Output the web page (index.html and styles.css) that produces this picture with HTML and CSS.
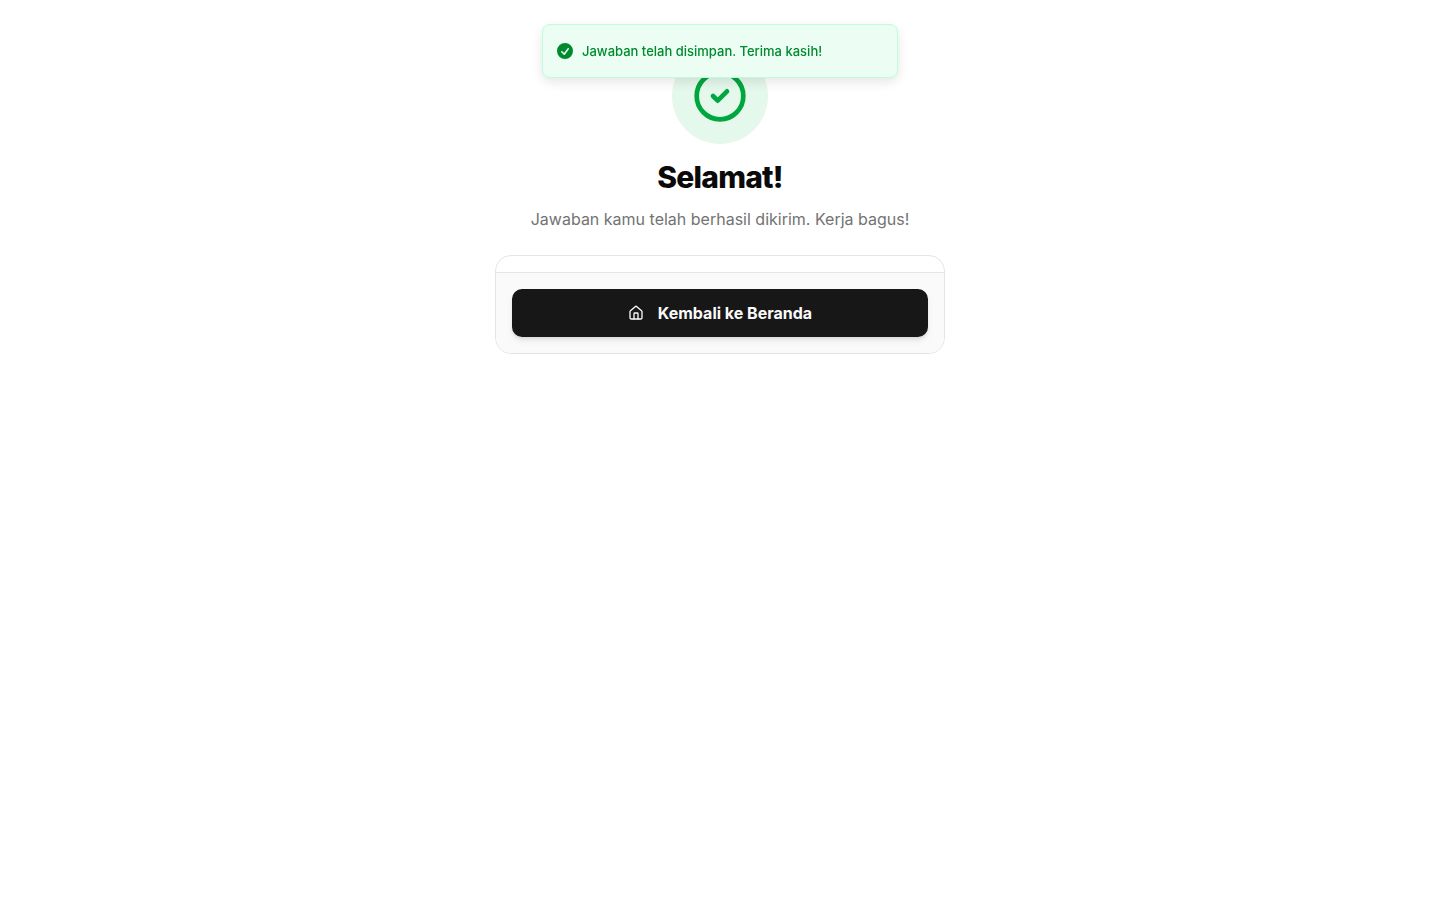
FILE: index.html
```html
<!DOCTYPE html>
<html lang="id">

<head>
    <meta charset="UTF-8">
    <meta name="viewport" content="width=device-width, initial-scale=1.0">
    <title>Selamat!</title>
    <link rel="stylesheet" href="styles.css">
</head>

<body>

    <div class="toast" role="status">
        <svg class="toast-icon" viewBox="0 0 20 20" fill="currentColor" aria-hidden="true">
            <path fill-rule="evenodd" clip-rule="evenodd" d="M10 18a8 8 0 100-16 8 8 0 000 16zm3.857-9.809a.75.75 0 00-1.214-.882l-3.483 4.79-1.88-1.88a.75.75 0 10-1.06 1.061l2.5 2.5a.75.75 0 001.137-.089l4-5.5z"/>
        </svg>
        <p class="toast-text">Jawaban telah disimpan. Terima kasih!</p>
    </div>

    <main class="container">
        <header class="header">
            <div class="badge">
                <svg class="badge-icon" viewBox="0 0 24 24" aria-hidden="true">
                    <circle cx="12" cy="12" r="10"/>
                    <path d="m9 12 2 2 4-4"/>
                </svg>
            </div>
            <h1>Selamat!</h1>
            <p class="subtitle">Jawaban kamu telah berhasil dikirim. Kerja bagus!</p>
        </header>

        <section class="card">
            <div class="card-footer">
                <button type="button" class="btn">
                    <svg class="btn-icon" viewBox="0 0 24 24" aria-hidden="true">
                        <path d="M15 21v-8a1 1 0 0 0-1-1h-4a1 1 0 0 0-1 1v8"/>
                        <path d="M3 10a2 2 0 0 1 .709-1.528l7-5.999a2 2 0 0 1 2.582 0l7 5.999A2 2 0 0 1 21 10v9a2 2 0 0 1-2 2H5a2 2 0 0 1-2-2z"/>
                    </svg>
                    Kembali ke Beranda
                </button>
            </div>
        </section>
    </main>

</body>

</html>
```
FILE: styles.css
```css
* {
    margin: 0;
    padding: 0;
    box-sizing: border-box;
}

body {
    font-family: Inter, 'Liberation Sans', sans-serif;
    background-color: #ffffff;
    color: #0a0a0a;
    line-height: 24px;
}

svg {
    flex-shrink: 0;
}

/* Notification on top of the page */
.toast {
    position: fixed;
    top: 24px;
    left: 50%;
    transform: translateX(-50%);
    z-index: 10;
    display: flex;
    align-items: center;
    gap: 7px;
    width: 356px;
    max-width: calc(100% - 32px);
    padding: 16px 12px;
    background-color: #ecfdf3;
    border: 1px solid #bffcd9;
    border-radius: 8px;
    box-shadow: 0 4px 12px rgba(0, 0, 0, 0.1);
    color: #008a2e;
}

.toast-icon {
    width: 20px;
    height: 20px;
}

.toast-text {
    font-size: 13px;
    font-weight: 500;
    line-height: 20px;
}

.container {
    max-width: 482px;
    margin: 0 auto;
    padding: 48px 16px;
}

.header {
    display: flex;
    flex-direction: column;
    align-items: center;
    text-align: center;
}

.badge {
    display: flex;
    align-items: center;
    justify-content: center;
    width: 96px;
    height: 96px;
    margin-bottom: 16px;
    background-color: #e5f8ec;
    border-radius: 50%;
}

.badge-icon,
.btn-icon {
    fill: none;
    stroke: currentColor;
    stroke-width: 2;
    stroke-linecap: round;
    stroke-linejoin: round;
}

.badge-icon {
    width: 56px;
    height: 56px;
    color: #00a63e;
}

h1 {
    font-size: 30px;
    font-weight: 800;
    line-height: 34px;
    letter-spacing: -0.025em;
    margin-bottom: 12px;
}

.subtitle {
    font-size: 16px;
    line-height: 26px;
    color: #737373;
    margin-bottom: 23px;
}

/* Card */
.card {
    padding-top: 16px;
    border: 1px solid #e5e5e5;
    border-radius: 16px;
    overflow: hidden;
}

.card-footer {
    padding: 16px;
    background-color: #fafafa;
    border-top: 1px solid #e5e5e5;
}

.btn {
    display: flex;
    align-items: center;
    justify-content: center;
    gap: 14px;
    width: 100%;
    height: 48px;
    background-color: #171717;
    border: none;
    border-radius: 10px;
    box-shadow: 0 4px 6px -1px rgba(0, 0, 0, 0.1), 0 2px 4px -2px rgba(0, 0, 0, 0.1);
    color: #fafafa;
    font-family: inherit;
    font-size: 16px;
    font-weight: 700;
    cursor: pointer;
}

.btn:hover {
    background-color: #2e2e2e;
}

.btn-icon {
    width: 16px;
    height: 16px;
}
```
